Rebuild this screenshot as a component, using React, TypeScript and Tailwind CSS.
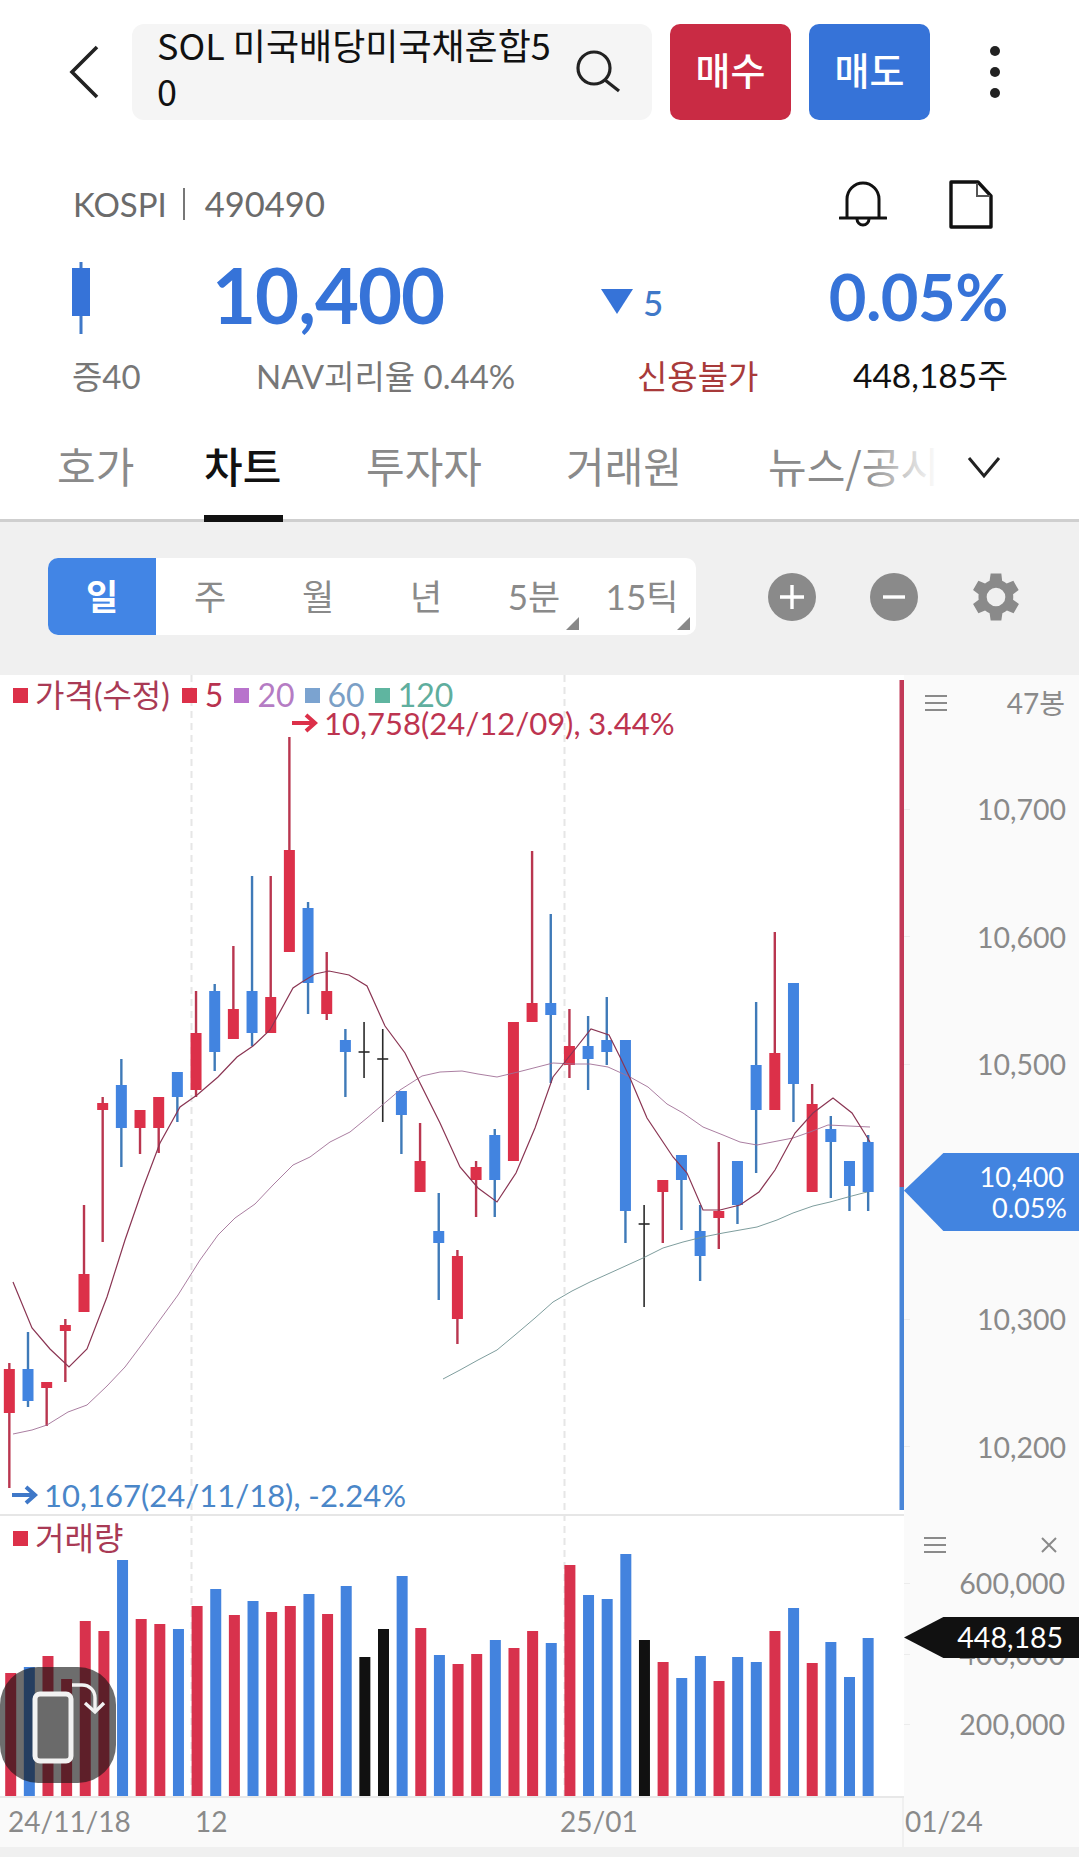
import React from "react";

const R = "#dc3049";
const B = "#4284e0";
const RW = "#b9364f";
const BW = "#3f7ab8";

// type, wick top, body top, body bottom, wick bottom
type C = [string, number, number, number, number];
const candles: C[] = [
  ["r", 1363, 1369, 1413, 1488],
  ["b", 1332, 1369, 1401, 1407],
  ["r", 1382, 1382, 1388, 1426],
  ["r", 1319, 1325, 1331, 1382],
  ["r", 1205, 1274, 1312, 1312],
  ["r", 1097, 1103, 1110, 1242],
  ["b", 1059, 1085, 1128, 1167],
  ["r", 1110, 1110, 1128, 1154],
  ["r", 1097, 1097, 1128, 1153],
  ["b", 1072, 1072, 1097, 1122],
  ["r", 991, 1033, 1090, 1097],
  ["b", 984, 991, 1052, 1071],
  ["r", 946, 1009, 1039, 1039],
  ["b", 876, 991, 1033, 1046],
  ["r", 876, 997, 1033, 1033],
  ["r", 737, 850, 952, 952],
  ["b", 902, 908, 983, 1014],
  ["r", 952, 991, 1014, 1020],
  ["b", 1029, 1040, 1052, 1097],
  ["k", 1022, 1052, 1052, 1078],
  ["k", 1029, 1059, 1059, 1122],
  ["b", 1091, 1091, 1115, 1154],
  ["r", 1123, 1161, 1192, 1192],
  ["b", 1193, 1231, 1243, 1300],
  ["r", 1250, 1256, 1319, 1344],
  ["r", 1161, 1167, 1180, 1217],
  ["b", 1129, 1135, 1180, 1217],
  ["r", 1022, 1022, 1161, 1161],
  ["r", 851, 1003, 1022, 1022],
  ["b", 914, 1003, 1015, 1083],
  ["r", 1009, 1046, 1065, 1078],
  ["b", 1016, 1046, 1059, 1090],
  ["b", 997, 1040, 1052, 1065],
  ["b", 1040, 1040, 1211, 1243],
  ["k", 1205, 1224, 1224, 1307],
  ["r", 1180, 1180, 1192, 1243],
  ["b", 1155, 1155, 1180, 1230],
  ["b", 1205, 1231, 1256, 1281],
  ["r", 1142, 1211, 1218, 1249],
  ["b", 1161, 1161, 1205, 1224],
  ["b", 1002, 1065, 1110, 1173],
  ["r", 932, 1053, 1110, 1110],
  ["b", 983, 983, 1084, 1122],
  ["r", 1084, 1104, 1192, 1192],
  ["b", 1116, 1129, 1142, 1198],
  ["b", 1161, 1161, 1186, 1211],
  ["b", 1135, 1142, 1192, 1211],
];

const volumes: [string, number][] = [
  ["r", 1673], ["b", 1667], ["r", 1656], ["r", 1679], ["r", 1621], ["r", 1631], ["b", 1560], ["r", 1619],
  ["r", 1624], ["b", 1629], ["r", 1606], ["b", 1589], ["r", 1615], ["b", 1601], ["r", 1612], ["r", 1606],
  ["b", 1594], ["r", 1614], ["b", 1586], ["k", 1657], ["k", 1629], ["b", 1576], ["r", 1628], ["b", 1655],
  ["r", 1664], ["r", 1654], ["b", 1640], ["r", 1648], ["r", 1631], ["b", 1643], ["r", 1565], ["b", 1595],
  ["b", 1599], ["b", 1554], ["k", 1640], ["r", 1662], ["b", 1678], ["b", 1656], ["r", 1681], ["b", 1657],
  ["b", 1662], ["r", 1631], ["b", 1608], ["r", 1663], ["b", 1642], ["b", 1677], ["b", 1638],
];

const ma5 =
  "13,1282 32,1328 50,1349 69,1367 87,1349 107,1297 125,1240 143,1188 160,1143 180,1107 197,1095 218,1077 237,1057 253,1046 270,1030 293,988 302,982 315,974 329,971 349,975 367,986 385,1026 405,1053 420,1083 440,1123 460,1167 478,1188 497,1202 516,1173 535,1128 553,1077 572,1053 591,1029 609,1035 620,1057 630,1078 647,1118 673,1157 687,1173 703,1210 720,1210 740,1205 759,1192 775,1170 795,1133 813,1113 833,1098 852,1113 870,1142";
const ma20 =
  "13,1434 32,1430 47,1425 68,1412 87,1405 107,1386 125,1367 143,1343 178,1295 200,1260 218,1235 235,1218 255,1204 273,1185 293,1165 310,1157 330,1142 350,1132 367,1118 400,1090 422,1076 440,1072 462,1071 478,1074 497,1077 518,1072 553,1063 573,1064 590,1064 608,1067 630,1077 648,1087 667,1104 683,1113 703,1127 723,1135 740,1142 757,1145 793,1138 810,1132 828,1125 870,1127";
const ma60 =
  "443,1379 460,1370 478,1360 497,1350 515,1335 535,1318 553,1302 572,1291 590,1282 610,1273 643,1258 663,1248 683,1242 703,1237 723,1233 757,1227 777,1220 793,1213 813,1206 830,1202 848,1197 867,1192";

function PriceChart() {
  return (
    <svg viewBox="0 675 904 839" className="block w-[904px] h-[839px]">
      <line x1="191.5" y1="675" x2="191.5" y2="1514" stroke="#e6e6e6" strokeWidth="2" strokeDasharray="7 5" />
      <line x1="564.5" y1="675" x2="564.5" y2="1514" stroke="#e6e6e6" strokeWidth="2" strokeDasharray="7 5" />
      {candles.map((c, i) => {
        const x = 9.33 + 18.67 * i;
        if (c[0] === "k") {
          return (
            <g key={i} stroke="#2a2a2a" strokeWidth="1.6">
              <line x1={x} y1={c[1]} x2={x} y2={c[4]} />
              <line x1={x - 5.5} y1={c[2]} x2={x + 5.5} y2={c[2]} />
            </g>
          );
        }
        const red = c[0] === "r";
        return (
          <g key={i}>
            <line x1={x} y1={c[1]} x2={x} y2={c[4]} stroke={red ? RW : BW} strokeWidth="2.4" />
            <rect x={x - 5.5} y={c[2]} width="11" height={c[3] - c[2]} fill={red ? R : B} />
          </g>
        );
      })}
      <polyline points={ma60} fill="none" stroke="#6f9292" strokeWidth="0.9" />
      <polyline points={ma20} fill="none" stroke="#a06f96" strokeWidth="0.9" />
      <polyline points={ma5} fill="none" stroke="#8a3553" strokeWidth="1.2" />
      <rect x="899.5" y="680" width="5" height="507" fill="#c23a58" />
      <rect x="899.5" y="1187" width="5" height="323" fill="#4a86d8" />
    </svg>
  );
}

function VolumeChart() {
  return (
    <svg viewBox="0 1514 904 284" className="block w-[904px] h-[284px]">
      <line x1="191.5" y1="1514" x2="191.5" y2="1798" stroke="#e6e6e6" strokeWidth="2" strokeDasharray="7 5" />
      <line x1="564.5" y1="1514" x2="564.5" y2="1798" stroke="#e6e6e6" strokeWidth="2" strokeDasharray="7 5" />
      {volumes.map((v, i) => (
        <rect
          key={i}
          x={10.7 + 18.64 * i - 5.5}
          y={v[1]}
          width="11"
          height={1796 - v[1]}
          fill={v[0] === "r" ? "#d8324d" : v[0] === "b" ? "#4383de" : "#111111"}
        />
      ))}
      <rect x="0" y="1796" width="904" height="2" fill="#e8e8e8" />
    </svg>
  );
}

function Burger() {
  return (
    <svg width="24" height="18" viewBox="0 0 24 18" className="block">
      <g stroke="#8a8a8a" strokeWidth="2">
        <line x1="1" y1="2" x2="23" y2="2" />
        <line x1="1" y1="9" x2="23" y2="9" />
        <line x1="1" y1="16" x2="23" y2="16" />
      </g>
    </svg>
  );
}

function AxisRow({ label }: { label?: string }) {
  return (
    <div className="h-[127.5px] flex items-center pr-[13px] pb-[2px]">
      <div className="w-[6px] h-px bg-[#ececec]" />
      <span className="ml-auto text-[28.5px] leading-none text-[#8a8a8a]">{label}</span>
    </div>
  );
}

function VolRow({ label }: { label: string }) {
  return (
    <div className="h-[70.5px] flex items-center pr-[14px] pb-[3px]">
      <div className="w-[6px] h-px bg-[#ececec]" />
      <span className="ml-auto text-[28.5px] leading-none text-[#8a8a8a]">{label}</span>
    </div>
  );
}

function Sq({ c }: { c: string }) {
  return <span className={`inline-block w-[15px] h-[15px] ${c}`} />;
}

export default function App() {
  const tabs = [
    { t: "호가", w: "w-[147px]", c: "text-[#8a8a8a]" },
    { t: "차트", w: "w-[162px]", c: "text-[#111] font-medium" },
    { t: "투자자", w: "w-[200px]", c: "text-[#8a8a8a]" },
    { t: "거래원", w: "w-[202px]", c: "text-[#8a8a8a]" },
  ];
  return (
    <div className="w-[1079px] h-[1857px] overflow-hidden bg-[#f0f0f0] flex flex-col [font-family:Lato,'Noto_Sans_CJK_KR',sans-serif]">
      {/* top bar */}
      <div className="bg-white h-[182px] pt-[24px] flex items-start">
        <div className="w-[132px] h-[96px] flex items-center pl-[68px]">
          <svg width="32" height="56" viewBox="0 0 32 56">
            <polyline points="29,3 4,28 29,53" fill="none" stroke="#222" strokeWidth="3.6" />
          </svg>
        </div>
        <div className="w-[520px] h-[96px] rounded-[12px] bg-[#f5f5f5] flex items-center pl-[25px] pr-[31px] justify-between">
          <div className="w-[402px] mb-[10px] text-[36px] leading-[46px] text-[#111] break-all [font-family:'Noto_Sans_CJK_KR',sans-serif]">
            SOL 미국배당미국채혼합50
          </div>
          <svg width="46" height="44" viewBox="0 0 46 44" className="shrink-0">
            <circle cx="19" cy="18" r="16" fill="none" stroke="#222" strokeWidth="3.2" />
            <line x1="30" y1="30" x2="44" y2="41" stroke="#222" strokeWidth="3.2" />
          </svg>
        </div>
        <div className="ml-[18px] w-[121px] h-[96px] pb-[8px] rounded-[10px] bg-[#c92b44] flex items-center justify-center text-white text-[38px] font-medium [font-family:'Noto_Sans_CJK_KR',sans-serif]">
          매수
        </div>
        <div className="ml-[18px] w-[121px] h-[96px] pb-[8px] rounded-[10px] bg-[#3673d8] flex items-center justify-center text-white text-[38px] font-medium [font-family:'Noto_Sans_CJK_KR',sans-serif]">
          매도
        </div>
        <div className="w-[129px] h-[96px] flex flex-col items-center justify-center gap-[11px]">
          <span className="w-[10px] h-[10px] rounded-full bg-[#222]" />
          <span className="w-[10px] h-[10px] rounded-full bg-[#222]" />
          <span className="w-[10px] h-[10px] rounded-full bg-[#222]" />
        </div>
      </div>

      {/* code row */}
      <div className="bg-white h-[61px] flex items-start pl-[73px] pr-[84px] text-[33px] leading-[46px] text-[#6b6b6b]">
        <div className="flex items-center h-[46px] mt-[-1px]">
          <span>KOSPI</span>
          <span className="ml-[16px] mr-[20px] w-[2px] h-[32px] bg-[#777]" />
          <span className="text-[34.5px]">490490</span>
        </div>
        <div className="ml-auto flex items-start gap-[62px] mt-[-2px]">
          <svg width="48" height="50" viewBox="0 0 48 50">
            <path d="M8 37V19a16 16 0 0 1 32 0v18" fill="none" stroke="#111" strokeWidth="3" />
            <line x1="1" y1="38" x2="47" y2="38" stroke="#111" strokeWidth="3" strokeLinecap="round" />
            <path d="M18 39a6 6 0 0 0 12 0" fill="none" stroke="#111" strokeWidth="3" />
          </svg>
          <svg width="44" height="50" viewBox="0 0 44 50" className="mr-[2px]">
            <path d="M2 2H29L42 16V47H2Z" fill="none" stroke="#111" strokeWidth="3.4" strokeLinejoin="round" />
            <path d="M28 3V16H41" fill="none" stroke="#555" strokeWidth="2" />
          </svg>
        </div>
      </div>

      {/* price row */}
      <div className="bg-white h-[102px] flex items-center pl-[72px] pr-[71px]">
        <svg width="18" height="72" viewBox="0 0 18 72" className="shrink-0 mt-[8px]">
          <rect x="7.5" y="0" width="3" height="72" fill="#3f78c8" />
          <rect x="0" y="6" width="18" height="48" fill="#3673d8" />
        </svg>
        <span className="ml-[122px] w-[388px] mt-[2px] text-[76px] leading-none font-bold tracking-[-1px] text-[#3673d8]">10,400</span>
        <svg width="32" height="25" viewBox="0 0 32 25" className="mt-[14px] ml-[1px] shrink-0">
          <polygon points="0,0 32,0 16,25" fill="#3673d8" />
        </svg>
        <span className="ml-[10px] mt-[17px] text-[35px] leading-none font-medium text-[#3f78c8]">5</span>
        <span className="ml-auto mt-[4px] text-[65px] leading-none font-bold tracking-[-0.5px] text-[#3673d8]">0.05%</span>
      </div>

      {/* info row */}
      <div className="bg-white h-[62px] flex items-center pl-[72px] pr-[71px] text-[33px] leading-none text-[#777]">
        <span className="w-[184px]">증40</span>
        <span className="w-[381px]">NAV괴리율 0.44%</span>
        <span className="text-[#a83a3a]">신용불가</span>
        <span className="ml-auto text-[33.5px] text-[#111]">448,185주</span>
      </div>

      {/* tabs */}
      <div className="bg-white h-[115px] border-b-[3px] border-[#cfcfcf] flex items-start pl-[57px] text-[42px] leading-[56px] [font-family:'Noto_Sans_CJK_KR',sans-serif] relative">
        {tabs.map((t, i) => (
          <div key={t.t} className={`${t.w} h-[112px] relative pt-[30px] ${t.c}`}>
            {t.t}
            {i === 1 && <div className="absolute left-0 w-[79px] bottom-[-3px] h-[7px] bg-[#111]" />}
          </div>
        ))}
        <div className="relative pt-[30px] w-[170px] text-[#8a8a8a] whitespace-nowrap overflow-hidden">
          뉴스/공시
          <div className="absolute right-0 top-0 bottom-0 w-[75px] bg-linear-to-r from-transparent to-white" />
        </div>
        <svg width="34" height="24" viewBox="0 0 34 24" className="ml-[29px] mt-[48px]">
          <polyline points="2,3 17,21 32,3" fill="none" stroke="#222" strokeWidth="3" />
        </svg>
      </div>

      {/* toolbar */}
      <div className="h-[153px] flex items-start pl-[48px] pt-[36px]">
        <div className="w-[648px] h-[77px] bg-white rounded-[10px] flex overflow-hidden text-[35px] text-[#8a8a8a]">
          <div className="w-[108px] bg-[#4285e5] text-white font-bold flex items-center justify-center">일</div>
          <div className="w-[108px] flex items-center justify-center">주</div>
          <div className="w-[108px] flex items-center justify-center">월</div>
          <div className="w-[108px] flex items-center justify-center">년</div>
          <div className="w-[108px] flex items-center justify-center relative">
            5분
            <span className="absolute right-[9px] bottom-[5px] w-[13px] h-[13px] bg-[#888] [clip-path:polygon(100%_0,100%_100%,0_100%)]" />
          </div>
          <div className="w-[108px] flex items-center justify-center relative">
            15틱
            <span className="absolute right-[6px] bottom-[5px] w-[13px] h-[13px] bg-[#888] [clip-path:polygon(100%_0,100%_100%,0_100%)]" />
          </div>
        </div>
        <svg width="48" height="48" viewBox="0 0 48 48" className="ml-[72px] mt-[15px]">
          <circle cx="24" cy="24" r="24" fill="#8a8a8a" />
          <path d="M24 12V36M12 24H36" stroke="#fff" strokeWidth="3.4" />
        </svg>
        <svg width="48" height="48" viewBox="0 0 48 48" className="ml-[54px] mt-[15px]">
          <circle cx="24" cy="24" r="24" fill="#8a8a8a" />
          <path d="M13 24H35" stroke="#fff" strokeWidth="3.4" />
        </svg>
        <svg width="48" height="48" viewBox="3 3 18 18" className="ml-[54px] mt-[15px]">
          <path
            fill="#8a8a8a"
            d="M19.4 13a7.6 7.6 0 0 0 0-2l2.1-1.6-2-3.5-2.5 1a7.6 7.6 0 0 0-1.7-1L15 3.2h-4l-.4 2.7a7.6 7.6 0 0 0-1.7 1l-2.5-1-2 3.5L6.5 11a7.6 7.6 0 0 0 0 2l-2.1 1.6 2 3.5 2.5-1a7.6 7.6 0 0 0 1.7 1l.4 2.7h4l.4-2.7a7.6 7.6 0 0 0 1.7-1l2.5 1 2-3.5ZM13 15.5a3.5 3.5 0 1 1 0-7 3.5 3.5 0 0 1 0 7Z"
            transform="translate(-1 0)"
          />
        </svg>
      </div>

      {/* price pane */}
      <div className="flex h-[839px] relative">
        <div className="w-[904px] bg-white relative">
          <PriceChart />
          <div className="absolute left-[13px] top-[1px] flex items-center text-[32px] leading-[38px] h-[38px]">
            <Sq c="bg-[#dc3049]" />
            <span className="ml-[7px] text-[#a93a55]">가격(수정)</span>
            <Sq c="bg-[#dc3049] ml-[12px]" />
            <span className="ml-[8px] text-[#b8324f]">5</span>
            <Sq c="bg-[#b873cc] ml-[11px]" />
            <span className="ml-[8px] text-[#b57cc4]">20</span>
            <Sq c="bg-[#7ba3d0] ml-[10px]" />
            <span className="ml-[8px] text-[#7b9fc6]">60</span>
            <Sq c="bg-[#5fb5a0] ml-[10px]" />
            <span className="ml-[8px] text-[#5fae9e]">120</span>
          </div>
          <div className="absolute left-[291px] top-[29px] flex items-center text-[31px] leading-[38px] text-[#bd3450] whitespace-nowrap">
            <svg width="27" height="22" viewBox="0 0 27 22" className="mr-[6px]">
              <path d="M1 11H23M15 3L24 11L15 19" fill="none" stroke="#dc3049" strokeWidth="4" />
            </svg>
            10,758(24/12/09), 3.44%
          </div>
          <div className="absolute left-[11px] top-[801px] flex items-center text-[31px] leading-[38px] text-[#4a86c8] whitespace-nowrap">
            <svg width="27" height="22" viewBox="0 0 27 22" className="mr-[6px]">
              <path d="M1 11H23M15 3L24 11L15 19" fill="none" stroke="#3f78c8" strokeWidth="4" />
            </svg>
            10,167(24/11/18), -2.24%
          </div>
        </div>
        <div className="flex-1 bg-[#fafafa] relative">
          <div className="h-[71.5px] flex items-start pl-[20px] pr-[14px] pt-[10px]">
            <div className="mt-[9px]">
              <Burger />
            </div>
            <span className="ml-auto text-[28px] leading-[36px] text-[#8a8a8a]">47봉</span>
          </div>
          <AxisRow label="10,700" />
          <AxisRow label="10,600" />
          <AxisRow label="10,500" />
          <AxisRow />
          <AxisRow label="10,300" />
          <AxisRow label="10,200" />
          <div className="absolute left-0 top-[478px] w-[175px] h-[78px] bg-[#4284e0] [clip-path:polygon(22.5%_0,100%_0,100%_100%,22.5%_100%,0_48%)] text-white text-[27px] leading-[31px] text-right pr-[12px] pt-[8px]">
            <div className="pr-[3px]">10,400</div>
            <div>0.05%</div>
          </div>
        </div>
      </div>

      {/* volume pane */}
      <div className="flex h-[284px] relative">
        <div className="w-[904px] bg-white relative">
          <VolumeChart />
          <div className="absolute left-0 right-0 top-0 h-[2px] bg-[#e6e6e6]" />
          <div className="absolute left-[13px] top-[5px] flex items-center text-[32px] leading-[38px] h-[38px]">
            <Sq c="bg-[#dc3049]" />
            <span className="ml-[7px] text-[#a93a55]">거래량</span>
          </div>
          <div className="absolute left-0 top-[153px] w-[116px] h-[116px] rounded-[38px] bg-[rgba(20,20,20,0.62)]">
            <svg width="116" height="116" viewBox="0 0 116 116" className="block">
              <rect x="35" y="27" width="36" height="67" rx="5" fill="#6a6a6a" stroke="#f2f2f2" strokeWidth="5" />
              <path d="M72 18H82C90 18 95 24 95 31V43" fill="none" stroke="#f2f2f2" strokeWidth="3.4" />
              <path d="M85 36L95 45L104 36" fill="none" stroke="#f2f2f2" strokeWidth="3.4" />
            </svg>
          </div>
        </div>
        <div className="flex-1 bg-[#fafafa] relative">
          <div className="h-[46px] mb-[-10.25px] pt-[15px] flex items-center pl-[19px] pr-[21px]">
            <Burger />
            <svg width="18" height="18" viewBox="0 0 18 18" className="ml-auto">
              <path d="M2 2L16 16M16 2L2 16" stroke="#8a8a8a" strokeWidth="2" />
            </svg>
          </div>
          <VolRow label="600,000" />
          <VolRow label="400,000" />
          <VolRow label="200,000" />
          <div className="absolute left-0 top-[103px] w-[175px] h-[41px] bg-[#111] [clip-path:polygon(22.5%_0,100%_0,100%_100%,22.5%_100%,0_50%)] text-white text-[28.5px] leading-[41px] text-right pr-[16px]">
            448,185
          </div>
        </div>
      </div>

      {/* date row */}
      <div className="h-[49px] flex bg-[#fafafa] text-[28px] leading-[47px] text-[#8a8a8a] relative">
        <span className="w-[195px] pl-[8px]">24/11/18</span>
        <span className="w-[365px]">12</span>
        <span className="w-[342px]">25/01</span>
        <span className="border-l-[2px] border-[#f0f0f0] pl-[1px]">01/24</span>
      </div>
    </div>
  );
}
